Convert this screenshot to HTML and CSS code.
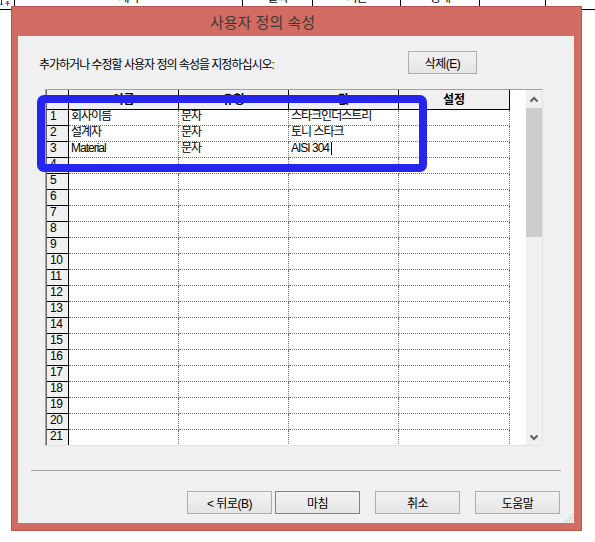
FILE: index.html
```html
<!DOCTYPE html>
<html lang="ko">
<head>
    <meta charset="UTF-8">
    <title>사용자 정의 속성</title>
    <link rel="stylesheet" href="styles.css">
</head>
<body>
    <!-- 뒤쪽 문서 목록 (헤더만 보임) -->
    <div class="sheet-head">
        <div class="sheet-col col-mark">
            <svg width="10" height="6" viewBox="0 0 10 6">
                <path d="M1.5 0 V5 M0 3.5 L1.5 5 L3 3.5" stroke="#1a1aff" stroke-width="1" fill="none"/>
                <path d="M7.5 6 V1 M6 2.5 L7.5 1 L9 2.5 M5.5 3.5 H9.5" stroke="#ff1a1a" stroke-width="1" fill="none"/>
            </svg>
        </div>
        <div class="sheet-col col-title">제목</div>
        <div class="sheet-col col-date">날짜</div>
        <div class="sheet-col col-time">시간</div>
        <div class="sheet-col col-state">상태</div>
        <div class="sheet-col col-extra"></div>
        <div class="sheet-col col-rest"></div>
    </div>

    <div class="dialog">
        <div class="dialog-title">사용자 정의 속성</div>

        <div class="dialog-body">
            <div class="intro">
                <p class="intro-text">추가하거나 수정할 사용자 정의 속성을 지정하십시오:</p>
                <button class="btn btn-delete">삭제(E)</button>
            </div>

            <div class="grid-box">
                <div class="grid-view">
                    <div class="prop-grid" id="prop-grid">
                        <div class="corner"></div>
                        <div class="head">이름</div>
                        <div class="head">유형</div>
                        <div class="head">값</div>
                        <div class="head">설정</div>
                    </div>
                </div>
                <div class="scrollbar">
                    <svg class="scroll-btn" width="16" height="17" viewBox="0 0 16 17">
                        <polyline points="4.5,11.5 8,8 11.5,11.5" stroke="#606060" stroke-width="2" fill="none"/>
                    </svg>
                    <div class="scroll-thumb"></div>
                    <div class="scroll-track"></div>
                    <svg class="scroll-btn" width="16" height="17" viewBox="0 0 16 17">
                        <polyline points="4.5,7.5 8,11 11.5,7.5" stroke="#606060" stroke-width="2" fill="none"/>
                    </svg>
                </div>
            </div>

            <div class="highlight"></div>

            <div class="separator"></div>

            <div class="actions">
                <div class="nav-group">
                    <button class="btn">&lt;&nbsp;뒤로(B)</button>
                    <button class="btn btn-primary">마침</button>
                </div>
                <button class="btn">취소</button>
                <button class="btn">도움말</button>
            </div>

            <svg class="grip" width="10" height="10" viewBox="0 0 10 10">
                <path d="M9.5 1.5 L1.5 9.5 M9.5 4.5 L4.5 9.5 M9.5 7.5 L7.5 9.5" stroke="#a8a8a8" stroke-width="1" stroke-dasharray="1 1" fill="none"/>
            </svg>
        </div>
    </div>

    <script>
        // 속성 목록 (이름, 유형, 값)
        var props = [
            ['회사이름', '문자', '스타크인더스트리'],
            ['설계자', '문자', '토니 스타크'],
            ['Material', '문자', 'AISI 304']
        ];

        var grid = document.getElementById('prop-grid');

        for (var i = 0; i < 21; i++) {
            var p = props[i] || ['', '', ''];
            var html = '<div class="num">' + (i + 1) + '</div>';
            html += '<div class="cell">' + p[0] + '</div>';
            html += '<div class="cell">' + p[1] + '</div>';
            // 편집 중인 셀에는 커서 표시
            html += '<div class="cell">' + p[2] + (i === 2 ? '<span class="caret"></span>' : '') + '</div>';
            html += '<div class="cell"></div>';
            grid.insertAdjacentHTML('beforeend', html);
        }
    </script>
</body>
</html>
```

FILE: styles.css
```css
* {
    margin: 0;
    padding: 0;
    box-sizing: border-box;
}

body {
    background: #fff;
    width: 595px;
    height: 542px;
    overflow: hidden;
    position: relative;
    font-family: "Liberation Sans", "Noto Sans CJK KR", sans-serif;
    font-size: 12px;
    color: #000;
}

/* 뒤쪽 목록 헤더 */
.sheet-head {
    display: flex;
    height: 23px;
    margin-top: -13px;
    border-bottom: 1px solid #000;
}

.sheet-col {
    border-right: 1px solid #000;
    text-align: center;
    line-height: 22px;
    letter-spacing: -1px;
}

.col-mark {
    width: 15px;
    display: flex;
    align-items: flex-end;
    padding-bottom: 3px;
}

.col-title { width: 228px; }
.col-date { width: 70px; }
.col-time { width: 88px; }
.col-state { width: 79px; }
.col-extra { width: 66px; }
.col-rest { flex: 1; border-right: none; }

/* 대화상자 */
.dialog {
    position: absolute;
    left: 11px;
    top: 6px;
    width: 571px;
    height: 525px;
    background: #d26b61;
    border: 1px solid #b5574e;
    padding: 0 7px 7px 6px;
    display: flex;
    flex-direction: column;
}

.dialog-title {
    height: 29px;
    line-height: 29px;
    font-size: 15px;
    color: #3b3b3b;
    padding-left: 192px;
    font-family: "Noto Sans CJK KR", sans-serif;
}

.dialog-body {
    flex: 1;
    background: #f0f0f0;
    position: relative;
    display: flex;
    flex-direction: column;
}

.intro {
    display: flex;
    align-items: flex-start;
    padding: 15px 97px 0 21px;
}

.intro-text {
    flex: 1;
    margin-top: 6px;
    line-height: 17px;
    letter-spacing: -1px;
}

.btn {
    width: 85px;
    height: 23px;
    border: 1px solid #adadad;
    background: linear-gradient(#f2f2f2, #e5e5e5);
    font: inherit;
    letter-spacing: -0.5px;
    color: #000;
}

.btn-delete {
    width: 69px;
}

.btn-primary {
    border-color: #3d94e6;
}

/* 속성 표 */
.grid-box {
    margin: 15px 0 0 27px;
    width: 498px;
    height: 357px;
    border: 1px solid;
    border-color: #a0a0a0 #e3e3e3 #e3e3e3 #a0a0a0;
    background: #fff;
    display: flex;
}

.grid-view {
    width: 480px;
    overflow: hidden;
}

.prop-grid {
    display: grid;
    grid-template-columns: 22px 110px 110px 110px 111px;
    grid-template-rows: 20px;
    grid-auto-rows: 16px;
    width: 464px;
    border-left: 1px solid #6d6d6d;
}

.corner, .head, .num {
    background: #f0f0f0;
    border-right: 1px solid #000;
    border-bottom: 1px solid #000;
}

.head {
    font-weight: bold;
    text-align: center;
    line-height: 21px;
    overflow: hidden;
}

.num {
    font-size: 12px;
    line-height: 13px;
    letter-spacing: -0.5px;
    padding-left: 3px;
}

.cell {
    border-right: 1px dotted #6f6f6f;
    border-bottom: 1px dotted #6f6f6f;
    padding-left: 2px;
    line-height: 13px;
    letter-spacing: -1px;
    white-space: nowrap;
    overflow: hidden;
}

.caret {
    display: inline-block;
    width: 1px;
    height: 13px;
    margin-left: 2px;
    background: #000;
    vertical-align: -3px;
}

.scrollbar {
    width: 16px;
    background: #f0f0f0;
    display: flex;
    flex-direction: column;
}

.scroll-btn {
    display: block;
    flex-shrink: 0;
}

.scroll-thumb {
    height: 129px;
    margin-top: 1px;
    background: #cdcdcd;
}

.scroll-track {
    flex: 1;
}

/* 선택 영역 표시 */
.highlight {
    position: absolute;
    left: 19px;
    top: 59px;
    width: 390px;
    height: 77px;
    border: 8px solid #2525ef;
    border-radius: 7px;
}

.separator {
    margin: 24px 0 0 13px;
    width: 530px;
    height: 1px;
    background: #a0a0a0;
}

.actions {
    margin-top: 20px;
    display: flex;
    justify-content: flex-end;
    gap: 15px;
    padding-right: 14px;
}

.nav-group {
    display: flex;
    gap: 3px;
}

.grip {
    position: absolute;
    right: 1px;
    bottom: 0;
}
```
